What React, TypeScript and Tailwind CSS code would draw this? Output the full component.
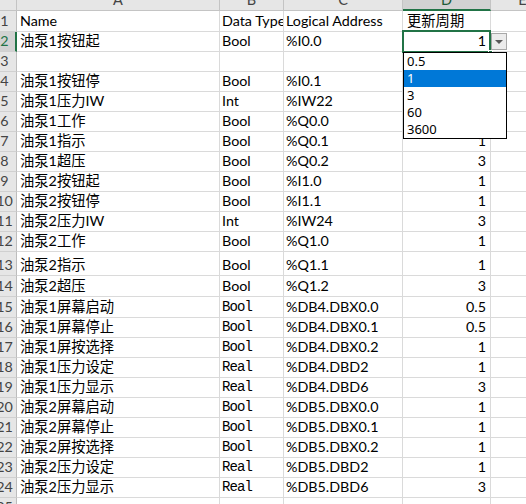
import React from 'react';

type Row = {
  n: number;
  h: string;
  a?: string;
  b?: string;
  c?: string;
  d?: string;
  song?: boolean;
};

const rows: Row[] = [
  { n: 1, h: 'h-[21px]', a: 'Name', b: 'Data Type', c: 'Logical Address', d: '更新周期' },
  { n: 2, h: 'h-[20px]', a: '油泵1按钮起', b: 'Bool', c: '%I0.0', d: '1' },
  { n: 3, h: 'h-[20px]' },
  { n: 4, h: 'h-[20px]', a: '油泵1按钮停', b: 'Bool', c: '%I0.1', d: '1' },
  { n: 5, h: 'h-[20px]', a: '油泵1压力IW', b: 'Int', c: '%IW22', d: '3' },
  { n: 6, h: 'h-[20px]', a: '油泵1工作', b: 'Bool', c: '%Q0.0', d: '1' },
  { n: 7, h: 'h-[20px]', a: '油泵1指示', b: 'Bool', c: '%Q0.1', d: '1' },
  { n: 8, h: 'h-[20px]', a: '油泵1超压', b: 'Bool', c: '%Q0.2', d: '3' },
  { n: 9, h: 'h-[20px]', a: '油泵2按钮起', b: 'Bool', c: '%I1.0', d: '1' },
  { n: 10, h: 'h-[20px]', a: '油泵2按钮停', b: 'Bool', c: '%I1.1', d: '1' },
  { n: 11, h: 'h-[20px]', a: '油泵2压力IW', b: 'Int', c: '%IW24', d: '3' },
  { n: 12, h: 'h-[20px]', a: '油泵2工作', b: 'Bool', c: '%Q1.0', d: '1' },
  { n: 13, h: 'h-[24px]', a: '油泵2指示', b: 'Bool', c: '%Q1.1', d: '1' },
  { n: 14, h: 'h-[21px]', a: '油泵2超压', b: 'Bool', c: '%Q1.2', d: '3' },
  { n: 15, h: 'h-[21px]', a: '油泵1屏幕启动', b: 'Bool', c: '%DB4.DBX0.0', d: '0.5', song: true },
  { n: 16, h: 'h-[20px]', a: '油泵1屏幕停止', b: 'Bool', c: '%DB4.DBX0.1', d: '0.5', song: true },
  { n: 17, h: 'h-[20px]', a: '油泵1屏按选择', b: 'Bool', c: '%DB4.DBX0.2', d: '1', song: true },
  { n: 18, h: 'h-[20px]', a: '油泵1压力设定', b: 'Real', c: '%DB4.DBD2', d: '1', song: true },
  { n: 19, h: 'h-[20px]', a: '油泵1压力显示', b: 'Real', c: '%DB4.DBD6', d: '3', song: true },
  { n: 20, h: 'h-[20px]', a: '油泵2屏幕启动', b: 'Bool', c: '%DB5.DBX0.0', d: '1', song: true },
  { n: 21, h: 'h-[20px]', a: '油泵2屏幕停止', b: 'Bool', c: '%DB5.DBX0.1', d: '1', song: true },
  { n: 22, h: 'h-[20px]', a: '油泵2屏按选择', b: 'Bool', c: '%DB5.DBX0.2', d: '1', song: true },
  { n: 23, h: 'h-[20px]', a: '油泵2压力设定', b: 'Real', c: '%DB5.DBD2', d: '1', song: true },
  { n: 24, h: 'h-[20px]', a: '油泵2压力显示', b: 'Real', c: '%DB5.DBD6', d: '3', song: true },
  { n: 25, h: 'h-[20px]' },
];

const cols = ['A', 'B', 'C', 'D', 'E'];
const options = ['0.5', '1', '3', '60', '3600'];

const cell = 'flex items-end pb-[1px] leading-[18px] border-r border-b border-[#dadada] whitespace-nowrap';

export default function App() {
  return (
    <div
      className="w-[526px] h-[504px] overflow-hidden bg-white text-black text-[14.3px]"
      style={{ fontFamily: "Lato, 'Noto Sans CJK SC', sans-serif" }}
    >
      <div className="relative grid w-[555px] grid-cols-[17px_203px_64px_119px_88px_64px]">
        {/* column headers */}
        <div className="h-[11px] bg-[#e6e6e6] border-r border-b border-[#c4c4c4]" />
        {cols.map((c) => (
          <div
            key={c}
            className={
              c === 'D'
                ? 'h-[11px] overflow-hidden bg-[#d2d2d2] border-r border-[#c4c4c4] border-b-2 border-b-[#217346]'
                : 'h-[11px] overflow-hidden bg-[#e6e6e6] border-r border-b border-[#c4c4c4]'
            }
          >
            <div
              className={
                c === 'D'
                  ? 'h-[21px] -mt-[11px] flex items-center justify-center text-[#1d5c38] text-[14.5px]'
                  : 'h-[21px] -mt-[11px] flex items-center justify-center text-[#444] text-[14.5px]'
              }
            >
              {c}
            </div>
          </div>
        ))}

        {rows.map((r) => (
          <React.Fragment key={r.n}>
            <div
              className={`${r.h} overflow-hidden border-b border-[#d0d0d0] ${
                r.n === 2 ? 'bg-[#d2d2d2] border-r-2 border-r-[#217346]' : 'bg-[#e6e6e6] border-r border-r-[#bdbdbd]'
              }`}
            >
              <div
                className={`w-[25px] -ml-[8px] h-full flex items-end justify-center pb-[1px] leading-[18px] ${
                  r.n === 2 ? 'text-[#217346]' : 'text-[#444]'
                }`}
              >
                {r.n}
              </div>
            </div>
            <div className={`${r.h} ${cell} overflow-hidden pl-[3px]`}>{r.a}</div>
            <div
              className={`${r.h} ${cell} overflow-hidden pl-[2px]`}
              style={r.song ? { fontFamily: "'Liberation Mono', monospace", fontSize: '14px', letterSpacing: '-0.9px' } : undefined}
            >
              {r.b}
            </div>
            <div className={`${r.h} ${cell} overflow-hidden pl-[2px]`}>{r.c}</div>
            <div className={`${r.h} ${cell} relative ${r.n === 1 ? 'pl-[4px]' : 'justify-end pr-[4px]'}`}>
              {r.d}
              {r.n === 2 && (
                <>
                  <div className="absolute -left-[1px] -top-[2px] w-[89px] h-[23px] border-2 border-[#217346]" />
                  <div className="absolute left-[85px] top-[18px] w-[5px] h-[5px] bg-[#217346] border border-white" />
                  <div className="absolute left-[88px] top-[1px] w-[16px] h-[17px] bg-[#ececec] border border-[#a8a8a8] flex items-center justify-center">
                    <div className="w-0 h-0 border-l-[4px] border-r-[4px] border-t-[4px] border-l-transparent border-r-transparent border-t-[#5a5a5a]" />
                  </div>
                </>
              )}
            </div>
            <div className={`${r.h} ${cell}`} />
          </React.Fragment>
        ))}

        {/* data validation list */}
        <div
          className="absolute left-[403px] top-[52px] w-[104px] bg-white border border-black"
          style={{ fontFamily: "'Noto Sans', sans-serif" }}
        >
          {options.map((o) => (
            <div
              key={o}
              className={
                o === '1'
                  ? 'h-[17px] pl-[3px] flex items-center bg-[#0078d7] text-white text-[13px]'
                  : 'h-[17px] pl-[3px] flex items-center text-black text-[13px]'
              }
            >
              {o}
            </div>
          ))}
        </div>
      </div>
    </div>
  );
}
